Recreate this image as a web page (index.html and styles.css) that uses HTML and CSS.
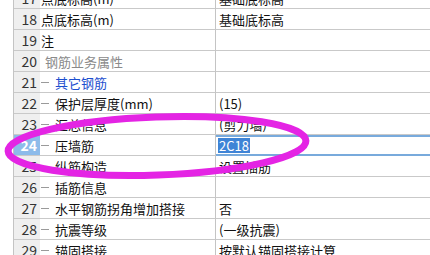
FILE: index.html
```html
<!DOCTYPE html>
<html>
<head>
    <title>属性编辑</title>
    <link rel="stylesheet" href="styles.css">
</head>
<body>
    <div class="sheet">
        <div class="grid">
            <div class="num">17</div><div class="name">点底标高(m)</div><div class="value">基础底标高</div>
            <div class="num">18</div><div class="name">点底标高(m)</div><div class="value">基础底标高</div>
            <div class="num">19</div><div class="name">注</div><div class="value"></div>
            <div class="num">20</div><div class="name group">钢筋业务属性</div><div class="value"></div>
            <div class="num">21</div><div class="name sub"><span class="dash"></span>其它钢筋</div><div class="value"></div>
            <div class="num">22</div><div class="name"><span class="dash"></span>保护层厚度(mm)</div><div class="value">(15)</div>
            <div class="num">23</div><div class="name"><span class="dash"></span>汇总信息</div><div class="value">(剪力墙)</div>
            <div class="num current">24</div><div class="name"><span class="dash"></span>压墙筋</div><div class="value editing"><span class="selected">2C18</span></div>
            <div class="num">25</div><div class="name"><span class="dash"></span>纵筋构造</div><div class="value">设置插筋</div>
            <div class="num">26</div><div class="name"><span class="dash"></span>插筋信息</div><div class="value"></div>
            <div class="num">27</div><div class="name"><span class="dash"></span>水平钢筋拐角增加搭接</div><div class="value">否</div>
            <div class="num">28</div><div class="name"><span class="dash"></span>抗震等级</div><div class="value">(一级抗震)</div>
            <div class="num">29</div><div class="name"><span class="dash"></span>锚固搭接</div><div class="value">按默认锚固搭接计算</div>
        </div>
        <svg class="mark" width="430" height="255" viewBox="0 0 430 255">
            <ellipse cx="157" cy="146" rx="149" ry="29" transform="rotate(-2 157 146)"
                     fill="none" stroke="#e424e4" stroke-width="7"/>
        </svg>
    </div>
</body>
</html>
```

FILE: styles.css
```css
body {
    margin: 0;
    background: #fff;
    font-family: "Noto Sans CJK SC", "Noto Sans", sans-serif;
    font-size: 13px;
    color: #111;
}
.sheet {
    position: relative;
    width: 430px;
    height: 255px;
    overflow: hidden;
}
.grid {
    display: grid;
    grid-template-columns: 26px 176px 1fr;
    grid-auto-rows: 21px;
    margin-top: -12px;
    margin-left: 13px;
    border-left: 1px solid #c4c4c4;
}
.grid > div {
    box-sizing: border-box;
    border-bottom: 1px solid #c9c9c9;
    display: flex;
    align-items: center;
    white-space: nowrap;
    overflow: hidden;
}
.num {
    background: #efefef;
    justify-content: flex-end;
    padding-right: 3px;
    font-size: 14px;
    color: #333;
}
.num.current {
    background: #8dbbea;
    color: #fff;
    font-weight: bold;
}
.name {
    padding-left: 1px;
    border-right: 1px solid #c4c4c4;
}
.name.group {
    padding-left: 5px;
    color: #8a8a8a;
}
.name.sub {
    color: #1d4fcf;
}
.dash {
    display: inline-block;
    width: 8px;
    height: 1px;
    background: #9a9a9a;
    margin-right: 6px;
}
.value {
    padding-left: 3px;
}
.value.editing {
    border-top: 2px solid #78aadc;
    border-bottom: 2px solid #78aadc;
    padding-left: 2px;
}
.selected {
    background: #3f84d6;
    color: #fff;
    padding: 0 1px;
    line-height: 15px;
}
.mark {
    position: absolute;
    left: 0;
    top: 0;
}
```
